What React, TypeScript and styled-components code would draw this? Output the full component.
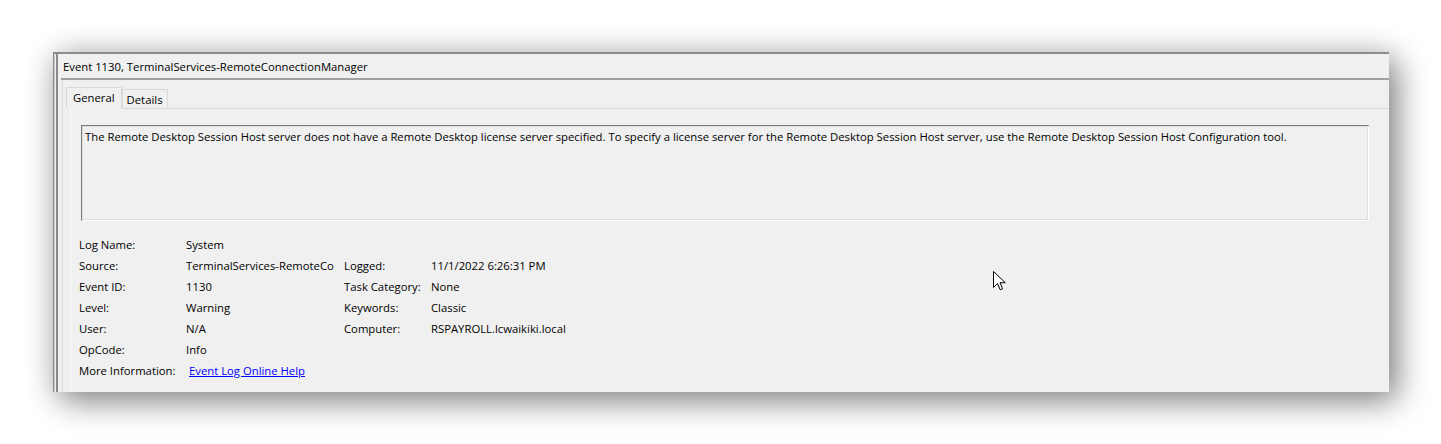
import React from "react";
import styled, { createGlobalStyle } from "styled-components";

const GlobalStyle = createGlobalStyle`
  html, body {
    margin: 0;
    padding: 0;
    background: #ffffff;
  }
  body {
    font-family: "Open Sans", "Noto Sans", Arial, sans-serif;
    font-size: 11.3px;
    color: #000;
  }
`;

const Page = styled.div`
  width: 1441px;
  height: 444px;
  padding: 52px 0 0 53px;
  box-sizing: border-box;
  overflow: hidden;
`;

const Window = styled.div`
  position: relative;
  width: 1336px;
  height: 340px;
  background: #f0f0f0;
  border-top: 2px solid #8c8c8c;
  border-left: 1px solid #8a8a8a;
  box-sizing: border-box;
  box-shadow: 8px 9px 30px rgba(0, 0, 0, 0.45), 0 0 30px rgba(0, 0, 0, 0.12);
  display: flex;
  overflow: hidden;
`;

const Rail = styled.div`
  width: 4px;
  border-left: 1px solid #c9c9c9;
  border-right: 2px solid #8a8a8a;
  box-sizing: border-box;
  flex: none;
`;

const Body = styled.div`
  flex: 1;
  min-width: 0;
  display: flex;
  flex-direction: column;
`;

const Title = styled.div`
  height: 26px;
  padding-left: 2px;
  line-height: 25px;
  border-bottom: 2px solid #a0a0a0;
  margin-left: 3px;
  box-sizing: border-box;
  white-space: nowrap;
`;

const Content = styled.div`
  flex: 1;
  display: flex;
  padding-left: 8px;
  border-left: 1px solid #dadada;
  margin-left: 4px;
  flex-direction: column;
`;

const TabStrip = styled.div`
  display: flex;
  align-items: flex-end;
  height: 28px;
  padding-left: 4px;
  margin-left: -9px;
`;

const Tab = styled.div<{ $active?: boolean }>`
  height: ${(p) => (p.$active ? 22 : 19)}px;
  line-height: ${(p) => (p.$active ? 20 : 19)}px;
  padding: 0 ${(p) => (p.$active ? 6 : 4)}px;
  background: #f0f0f0;
  border: 1px solid #d9d9d9;
  border-bottom: ${(p) => (p.$active ? "1px solid #f0f0f0" : "none")};
  box-sizing: border-box;
  margin-bottom: ${(p) => (p.$active ? -1 : 0)}px;
  position: relative;
  z-index: ${(p) => (p.$active ? 1 : 0)};
`;

const Panel = styled.div`
  flex: 1;
  border-top: 1px solid #d9d9d9;
  border-left: 1px solid #fbfbfb;
  margin-left: -1px;
  padding: 16px 20px 0 10px;
  display: flex;
  flex-direction: column;
`;

const Description = styled.div`
  height: 96px;
  border-top: 2px solid #7a7a7a;
  border-left: 2px solid #7a7a7a;
  border-right: 1px solid #ffffff;
  border-bottom: 1px solid #ffffff;
  outline: 1px solid #dedede;
  outline-offset: -2px;
  padding: 2px 2px;
  box-sizing: border-box;
  line-height: 16px;
`;

const Props = styled.div`
  display: grid;
  grid-template-columns: 107px 158px 87px auto;
  grid-auto-rows: 21px;
  margin-top: 13px;
  margin-left: -2px;
  align-items: center;
`;

const Cell = styled.div<{ $span?: number }>`
  white-space: nowrap;
  overflow: hidden;
  grid-column: ${(p) => (p.$span ? `span ${p.$span}` : "auto")};
`;

const Link = styled.a`
  color: #0000ff;
  text-decoration: underline;
  margin-left: 3px;
`;

const Cursor = styled.svg`
  position: absolute;
  left: 939px;
  top: 217px;
`;

type Row = [string, React.ReactNode, string?, string?];

// the source column is narrow, so the dialog shows the name cut short
const rows: Row[] = [
  ["Log Name:", "System"],
  ["Source:", "TerminalServices-RemoteCo", "Logged:", "11/1/2022 6:26:31 PM"],
  ["Event ID:", "1130", "Task Category:", "None"],
  ["Level:", "Warning", "Keywords:", "Classic"],
  ["User:", "N/A", "Computer:", "RSPAYROLL.lcwaikiki.local"],
  ["OpCode:", "Info"],
  ["More Information:", <Link href="#">Event Log Online Help</Link>],
];

export default function App() {
  return (
    <Page>
      <GlobalStyle />
      <Window>
        <Rail />
        <Body>
          <Title>Event 1130, TerminalServices-RemoteConnectionManager</Title>
          <Content>
            <TabStrip>
              <Tab $active>General</Tab>
              <Tab>Details</Tab>
            </TabStrip>
            <Panel>
              <Description>
                The Remote Desktop Session Host server does not have a Remote Desktop license server specified. To specify a license server for the Remote Desktop Session Host server, use the Remote Desktop Session Host Configuration tool.
              </Description>
              <Props>
                {rows.map((r, i) => (
                  <React.Fragment key={i}>
                    <Cell>{r[0]}</Cell>
                    {r[2] ? (
                      <>
                        <Cell>{r[1]}</Cell>
                        <Cell>{r[2]}</Cell>
                        <Cell>{r[3]}</Cell>
                      </>
                    ) : (
                      <Cell $span={3}>{r[1]}</Cell>
                    )}
                  </React.Fragment>
                ))}
              </Props>
            </Panel>
          </Content>
        </Body>
        <Cursor width="13" height="20" viewBox="0 0 13 20">
          <path
            d="M0.5 0.5 L0.5 16.5 L4.5 12.5 L7.2 18.8 L9.6 17.8 L7 11.7 L12.3 11.7 Z"
            fill="#fff"
            stroke="#000"
            strokeWidth="1"
          />
        </Cursor>
      </Window>
    </Page>
  );
}
